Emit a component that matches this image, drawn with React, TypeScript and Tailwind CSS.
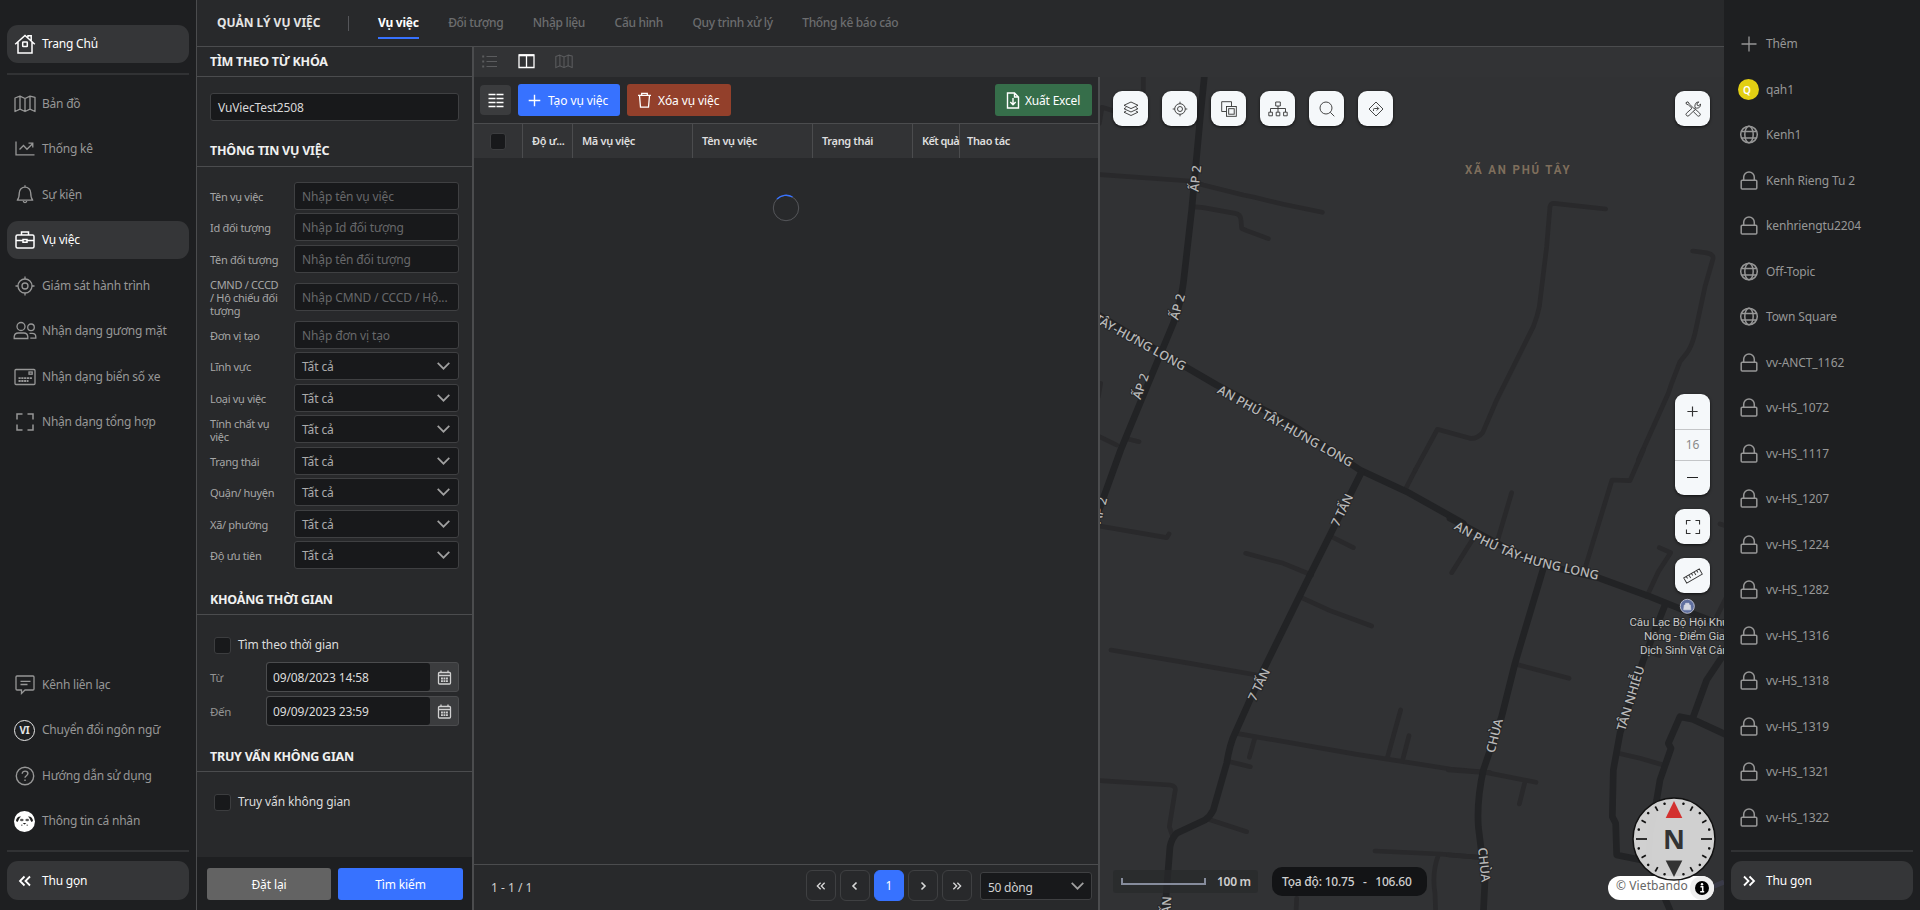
import React from "react";

type IconProps = { className?: string };

const Svg = ({ children, vb = "0 0 24 24", className, sw = 1.3 }: { children: React.ReactNode; vb?: string; className?: string; sw?: number }) => (
  <svg viewBox={vb} className={className} fill="none" stroke="currentColor" strokeWidth={sw}>
    {children}
  </svg>
);

const HomeIcon = () => (
  <Svg className="size-[22px]" vb="0 0 22 22" sw={1.5}>
    <path d="M1.2 11.2 11 2.4l9.800 8.800M4 9.2V20h14V9.2M14 4.2V2.800h3.2v4.800" />
    <rect x="8.7" y="9" width="4.6" height="4.6" rx="0.5" />
  </Svg>
);
const MapIcon = ({ className = "size-[22px]" }: IconProps) => (
  <Svg className={className} vb="0 0 22 22">
    <path d="M1 5v13.5l5-2.3 5 2.3 5-2.3 5 2.3V4.3L16 3.2 11 5.5 6 3.2zM6 3.2v13M11 5.5v13M16 3.2v13" strokeLinejoin="round" />
  </Svg>
);
const ChartIcon = () => (
  <Svg className="size-[22px]" vb="0 0 22 22">
    <path d="M2 3.5v13.3h18.5M5.5 11.5l4-4 3.5 3.7 5.5-5.5M14.5 5.2h4.3v4.2" />
  </Svg>
);
const BellIcon = () => (
  <Svg className="size-[22px]" vb="0 0 22 22">
    <path d="M3.3 16.2c1.7-2 2-3.500 2-7.400a5.700 5.700 0 0 1 11.400 0c0 3.900.3 5.400 2 7.400zM9.300 17c0 2 3.400 2 3.400 0M11 1.300v1.800" strokeLinejoin="round" />
  </Svg>
);
const CaseIcon = () => (
  <Svg className="size-[22px]" vb="0 0 22 22" sw={1.500}>
    <rect x="2" y="6" width="18" height="13" rx="1.500" />
    <path d="M7.500 6V3h7v3M2 11.500h7M13 11.500h7M9 10.500h4v2.700H9z" />
  </Svg>
);
const TargetIcon = ({ className = "size-[22px]" }: IconProps) => (
  <Svg className={className} vb="0 0 22 22">
    <circle cx="11" cy="11" r="7" />
    <circle cx="11" cy="11" r="3" />
    <path d="M11 1.500V4M11 18v2.500M1.500 11H4M18 11h2.500" />
  </Svg>
);
const PeopleIcon = () => (
  <Svg className="h-[22px] w-6 shrink-0 -ml-px" vb="0 0 24 22">
    <circle cx="8" cy="6.500" r="4" />
    <path d="M1.200 18.500v-2a4 4 0 0 1 4-3.500h5.600a4 4 0 0 1 4 3.500v2z" />
    <circle cx="18" cy="7.300" r="3.300" />
    <path d="M16.500 13.300h2.800a3.500 3.500 0 0 1 3.500 3.400v1.500h-5.500" />
  </Svg>
);
const PlateIcon = () => (
  <Svg className="size-[22px]" vb="0 0 22 22">
    <rect x="1" y="3.500" width="20" height="15" rx="1" />
    <path d="M4.500 12.200h13.500M4.500 15h10" strokeDasharray="2.200 .6" strokeWidth="1.800" />
    <rect x="15" y="6" width="3.200" height="2.200" />
  </Svg>
);
const FrameIcon = ({ className = "size-[22px]" }: IconProps) => (
  <Svg className={className} vb="0 0 22 22" sw={1.500}>
    <path d="M3 8.500V3h5.500M13.500 3H19v5.500M19 13.500V19h-5.500M8.500 19H3v-5.500" />
  </Svg>
);
const ChatIcon = () => (
  <Svg className="size-[22px]" vb="0 0 22 22">
    <path d="M3 2h16a1 1 0 0 1 1 1v12a1 1 0 0 1-1 1h-8l-3.500 3.500V16H3a1 1 0 0 1-1-1V3a1 1 0 0 1 1-1zM6.500 7.300h10M6.500 10.500h7" />
  </Svg>
);
const ViIcon = () => (
  <span className="flex size-[21px] items-center justify-center rounded-full border-[1.500px] border-[#e6e6e6] text-[10px] font-bold leading-none text-[#e6e6e6]">VI</span>
);
const HelpIcon = () => (
  <Svg className="size-[22px]" vb="0 0 22 22" sw={1.400}>
    <circle cx="11" cy="11" r="8.700" />
    <path d="M8.200 8.800c0-3.700 5.700-3.500 5.700-.2 0 2.100-2.900 2.100-2.900 4.200M11 14.500v1.500" />
  </Svg>
);
const AvatarIcon = () => (
  <svg viewBox="0 0 21 21" className="size-[21px]">
    <circle cx="10.500" cy="10.500" r="10.500" fill="#fff" />
    <g fill="#222">
      <path d="M2 10c0-3 2.500-5 5-4.500C5 7 5 9 3.500 11zM19 10c0-3-2.500-5-5-4.500 2 1.500 2 3.500 3.500 5.500z" />
      <ellipse cx="7.800" cy="9" rx="1.800" ry="1.300" opacity=".75" />
      <ellipse cx="13.200" cy="9" rx="1.800" ry="1.300" opacity=".75" />
      <path d="M8.700 12h3.600l-1.800 1.500zM7 13.800h1.500v.8H7zM12.500 13.800H14v.8h-1.500z" />
    </g>
  </svg>
);
const PlusIcon = ({ className = "size-[22px]", sw = 1.300 }: IconProps & { sw?: number }) => (
  <Svg className={className} vb="0 0 22 22" sw={sw}>
    <path d="M11 3.500v15M3.500 11h15" />
  </Svg>
);
const GlobeIcon = () => (
  <Svg className="size-[22px]" vb="0 0 22 22" sw={1.500}>
    <circle cx="11" cy="10.500" r="8.300" />
    <ellipse cx="11" cy="10.500" rx="4.200" ry="8.300" />
    <path d="M3.500 7.500h15M3.500 14h15" />
  </Svg>
);
const LockIcon = () => (
  <Svg className="size-[22px]" vb="0 0 22 22" sw={1.500}>
    <rect x="3.200" y="10.200" width="15.600" height="8.800" rx="1" />
    <path d="M5.700 10.200V7.200a5.300 5.300 0 0 1 10.600 0v3" />
  </Svg>
);
const Chevrons = ({ flip = false, className = "size-[22px]" }: IconProps & { flip?: boolean }) => (
  <Svg className={flip ? className + " -scale-x-100" : className} vb="0 0 22 22" sw={1.800}>
    <path d="m10.500 6.500-4.500 4.500 4.500 4.500M16 6.500l-4.500 4.500 4.500 4.500" />
  </Svg>
);
const Chevron = ({ className = "" }: IconProps) => (
  <Svg className={"h-2 w-[13px] " + className} vb="0 0 13 8" sw={1.700}>
    <path d="m.7.900 5.800 5.800L12.300.9" />
  </Svg>
);

const NAV = [
  { label: "Bản đồ", icon: <MapIcon /> },
  { label: "Thống kê", icon: <ChartIcon /> },
  { label: "Sự kiện", icon: <BellIcon /> },
  { label: "Vụ việc", icon: <CaseIcon />, active: true },
  { label: "Giám sát hành trình", icon: <TargetIcon /> },
  { label: "Nhận dạng gương mặt", icon: <PeopleIcon /> },
  { label: "Nhận dạng biển số xe", icon: <PlateIcon /> },
  { label: "Nhận dạng tổng hợp", icon: <FrameIcon /> },
];
const NAV_BOTTOM = [
  { label: "Kênh liên lạc", icon: <ChatIcon /> },
  { label: "Chuyển đổi ngôn ngữ", icon: <ViIcon /> },
  { label: "Hướng dẫn sử dụng", icon: <HelpIcon /> },
  { label: "Thông tin cá nhân", icon: <AvatarIcon /> },
];

function NavItem({ label, icon, active }: { label: string; icon: React.ReactNode; active?: boolean }) {
  return (
    <div className={"flex h-[38px] shrink-0 items-center rounded-[11px] pl-[7px] " + (active ? "bg-[#353638] text-white" : "text-[#979797]")}>
      <span className="flex w-[22px] shrink-0 items-center justify-start">{icon}</span>
      <span className="ml-1.5 whitespace-nowrap">{label}</span>
    </div>
  );
}

const Divider = () => <div className="h-0.5 shrink-0 bg-[#313234]" />;

function LeftSidebar() {
  return (
    <aside className="flex h-full w-[196px] shrink-0 flex-col bg-[#1e1f21] px-[7px] pb-2.5 pt-[25px] tracking-[-0.22px]">
      <NavItem label="Trang Chủ" icon={<HomeIcon />} active />
      <div className="mb-[9.600px] mt-2.5"><Divider /></div>
      <div className="flex flex-col gap-[7.500px]">
        {NAV.map((n) => <NavItem key={n.label} {...n} />)}
      </div>
      <div className="mt-auto flex flex-col gap-[7.500px] pb-[9.600px]">
        {NAV_BOTTOM.map((n) => <NavItem key={n.label} {...n} />)}
      </div>
      <Divider />
      <div className="mt-[9px] flex h-[39px] shrink-0 items-center rounded-[11px] bg-[#353638] pl-[7px] text-white">
        <Chevrons />
        <span className="ml-1.5">Thu gọn</span>
      </div>
    </aside>
  );
}

const CHANNELS: [string, "globe" | "lock"][] = [
  ["Kenh1", "globe"], ["Kenh Rieng Tu 2", "lock"], ["kenhriengtu2204", "lock"], ["Off-Topic", "globe"], ["Town Square", "globe"],
  ["vv-ANCT_1162", "lock"], ["vv-HS_1072", "lock"], ["vv-HS_1117", "lock"], ["vv-HS_1207", "lock"], ["vv-HS_1224", "lock"],
  ["vv-HS_1282", "lock"], ["vv-HS_1316", "lock"], ["vv-HS_1318", "lock"], ["vv-HS_1319", "lock"], ["vv-HS_1321", "lock"], ["vv-HS_1322", "lock"],
];

function RightSidebar() {
  return (
    <aside className="flex h-full w-[196px] shrink-0 flex-col bg-[#1e1f21] px-[7px] pb-2.5 pt-[25px] tracking-[-0.13px]">
      <div className="flex flex-col gap-[7.500px] pt-[0.400px]">
        <NavItem label="Thêm" icon={<PlusIcon />} />
        <NavItem label="qah1" icon={<span className="flex size-[21px] items-center justify-start rounded-full bg-[#e2cf13] pl-[5px] text-[10px] font-semibold text-white">Q</span>} />
        {CHANNELS.map(([name, kind]) => (
          <NavItem key={name} label={name} icon={kind === "globe" ? <GlobeIcon /> : <LockIcon />} />
        ))}
      </div>
      <div className="mt-auto"><Divider /></div>
      <div className="mt-[9px] flex h-[39px] shrink-0 items-center rounded-[11px] bg-[#353638] pl-[7px] text-white">
        <Chevrons flip />
        <span className="ml-1.5">Thu gọn</span>
      </div>
    </aside>
  );
}

const TABS = ["Đối tượng", "Nhập liệu", "Cấu hình", "Quy trình xử lý", "Thống kê báo cáo"];

function TopBar() {
  return (
    <header className="flex h-[47px] shrink-0 items-center border-b border-[#4b4c4e] pl-5">
      <h1 className="w-[104px] whitespace-nowrap text-[12px] font-bold text-[#e4e4e4]">QUẢN LÝ VỤ VIỆC</h1>
      <div className="ml-[27px] h-[15px] w-px bg-[#55565a]" />
      <nav className="ml-[29px] flex h-full items-center gap-[29.500px] text-[12px] font-medium tracking-[-0.32px] text-[#6c6d6f]">
        <span className="-mb-[8px] whitespace-nowrap border-b-2 border-[#3772ff] pb-[6px] font-bold tracking-[-0.25px] text-white">Vụ việc</span>
        {TABS.map((t) => <span key={t} className="whitespace-nowrap">{t}</span>)}
      </nav>
    </header>
  );
}

const FIELDS: { label: string; placeholder?: string; tall?: boolean }[] = [
  { label: "Tên vụ việc", placeholder: "Nhập tên vụ việc" },
  { label: "Id đối tượng", placeholder: "Nhập Id đối tượng" },
  { label: "Tên đối tượng", placeholder: "Nhập tên đối tượng" },
  { label: "CMND / CCCD / Hộ chiếu đối tượng", placeholder: "Nhập CMND / CCCD / Hộ...", tall: true },
  { label: "Đơn vị tạo", placeholder: "Nhập đơn vị tạo" },
  { label: "Lĩnh vực" }, { label: "Loại vụ việc" }, { label: "Tính chất vụ việc" }, { label: "Trạng thái" },
  { label: "Quận/ huyện" }, { label: "Xã/ phường" }, { label: "Độ ưu tiên" },
];

const SectionTitle = ({ children, className }: { children: React.ReactNode; className: string }) => (
  <div className={"flex shrink-0 items-end border-b border-[#4b4c4e] pl-[13px] text-[12.500px] font-bold leading-[17px] tracking-[-0.25px] text-[#f0f0f0] " + className}>{children}</div>
);

const DateRow = ({ label, value }: { label: string; value: string }) => (
  <div className="flex h-[30px] items-center">
    <span className="w-14 pt-px text-[11.500px] tracking-[-0.3px] text-[#939393]">{label}</span>
    <div className="flex h-[30px] flex-1 overflow-hidden rounded-[3px] border border-[#4b4c4e] bg-[#3b3c3e]">
      <div className="flex w-[163px] items-center rounded-[3px] bg-[#18191b] pl-[6px] pt-px text-[#dcdcdc]">{value}</div>
      <div className="flex flex-1 items-center justify-center text-[#d0d0d0]">
        <Svg className="size-[15px]" vb="0 0 15 15" sw={1.300}>
          <rect x="1.500" y="2.500" width="12" height="11.500" rx="1" />
          <path d="M4 .5v2M11 .5v2M1.500 5.500h12" />
          <path d="M4 8.500h7M4 11.200h7" strokeWidth="1.800" strokeDasharray="1.900 .6" />
        </Svg>
      </div>
    </div>
  </div>
);

const Checkbox = ({ className = "size-[17px]" }: IconProps) => <span className={"block shrink-0 rounded-[3px] border border-[#3c3d3f] bg-[#18191b] " + className} />;

function SearchPanel() {
  return (
    <section className="flex w-[275px] shrink-0 flex-col tracking-[-0.12px]">
      <SectionTitle className="h-[30px] pb-[6px]">TÌM THEO TỪ KHÓA</SectionTitle>
      <div className="mx-[13px] mt-4 flex h-7 w-[249px] shrink-0 items-center rounded-[3px] border border-[#3f4042] bg-[#18191b] pl-[7px] pt-0.5 text-[#d8d8d8]">VuViecTest2508</div>
      <SectionTitle className="h-[46px] pb-[7px]">THÔNG TIN VỤ VIỆC</SectionTitle>
      <div className="mt-[13px] flex shrink-0 flex-col pl-[13px]">
        {FIELDS.map((f) => (
          <div key={f.label} className={"flex items-center " + (f.tall ? "h-[44.500px]" : "h-[31.500px]")}>
            <span className="w-[84px] pr-3 pt-px text-[11px] leading-[13px] tracking-[-0.3px] text-[#a6a6a6]">{f.label}</span>
            <div className={"flex h-7 w-[165px] items-center rounded-[3px] border border-[#3f4042] bg-[#18191b] pl-[7px] pr-2 " + (f.placeholder ? "text-[#67686a]" : "text-[#ababab]")}>
              <span className="flex-1 whitespace-nowrap pt-0.5">{f.placeholder ?? "Tất cả"}</span>
              {!f.placeholder && <Chevron className="text-[#a0a0a0]" />}
            </div>
          </div>
        ))}
      </div>
      <SectionTitle className="h-[44px] pb-[6px]">KHOẢNG THỜI GIAN</SectionTitle>
      <div className="flex shrink-0 flex-col px-[13px] pt-[21px]">
        <div className="flex h-[18px] items-center gap-[7px] pl-1 text-[#dcdcdc]"><Checkbox /><span>Tìm theo thời gian</span></div>
        <div className="mt-2 flex flex-col gap-1">
          <DateRow label="Từ" value="09/08/2023 14:58" />
          <DateRow label="Đến" value="09/09/2023 23:59" />
        </div>
      </div>
      <SectionTitle className="h-[46px] pb-[6px]">TRUY VẤN KHÔNG GIAN</SectionTitle>
      <div className="flex h-[60px] items-center gap-[7px] pl-[17px] text-[#dcdcdc]"><Checkbox /><span>Truy vấn không gian</span></div>
      <div className="mt-auto flex h-[53px] shrink-0 gap-[7px] bg-[#1e1f21] pl-2.5 pt-[11px] text-white">
        <div className="flex h-8 w-[124px] items-center justify-center rounded-[3px] bg-[#636363] pt-0.5">Đặt lại</div>
        <div className="flex h-8 w-[125px] items-center justify-center rounded-[3px] bg-[#3772ff] pt-0.5">Tìm kiếm</div>
      </div>
    </section>
  );
}

function ViewBar() {
  return (
    <div className="flex h-[30px] shrink-0 items-center gap-[20px] bg-[#323335] pb-px pl-[7px] text-[#5b5c5e]">
      <Svg className="h-[15px] w-[17px]" vb="0 0 17 15" sw={1.200}>
        <path d="M5.500 2.500H16M5.500 7.500H16M5.500 12.500H16" />
        <path d="M1.200 2.500h2M1.200 7.500h2M1.200 12.500h2" strokeWidth="2" />
      </Svg>
      <Svg className="h-[15px] w-[17px] text-white" vb="0 0 17 15" sw={1.300}>
        <path d="M1 1h15v12.500H1zM8.500 1v12.500" />
        <path d="M1 1.300h15" strokeWidth="2" />
      </Svg>
      <MapIcon className="h-[19px] w-[18px]" />
    </div>
  );
}

const COLUMNS: [string, string][] = [
  ["Độ ư...", "w-[50px] pl-[9px]"],
  ["Mã vụ việc", "w-[120px] pl-[9px]"],
  ["Tên vụ việc", "w-[120px] pl-[9px]"],
  ["Trạng thái", "w-[100px] pl-[9px]"],
  ["Kết quả", "w-[47px] pl-[9px] tracking-[-0.6px]"],
];

const PageButton = ({ children, active }: { children: React.ReactNode; active?: boolean }) => (
  <span className={"flex h-[31px] w-[30px] items-center justify-center rounded-[6px] border " + (active ? "border-[#3772ff] bg-[#3772ff] text-white" : "border-[#3f4042] text-[#d8d8d8]")}>{children}</span>
);

function CaseList() {
  return (
    <section className="flex w-[624px] shrink-0 flex-col">
      <div className="flex h-[46px] shrink-0 items-center pl-1.5 pr-[6px] text-white">
        <span className="flex h-[30px] w-[31px] items-center justify-center rounded-[4px] bg-[#3b3c3e]">
          <Svg className="h-[15px] w-4" vb="0 0 16 15" sw={1.400}>
            <path d="M.5 1.500h7M8.500 1.500h7M.5 5.500h7M8.500 5.500h7M.5 9.500h7M8.500 9.500h7M.5 13.500h7M8.500 13.500h7" />
          </Svg>
        </span>
        <span className="ml-[7px] flex h-8 w-[102px] items-center rounded-[3px] bg-[#3772ff] pl-2 tracking-[-0.1px]">
          <PlusIcon className="mr-[5px] size-[17px]" sw={1.800} /><span className="pt-0.5">Tạo vụ việc</span>
        </span>
        <span className="ml-[7px] flex h-8 w-[104px] items-center rounded-[3px] bg-[#93402b] pl-[10px] tracking-[-0.1px]">
          <Svg className="mr-[6px] h-4 w-[15px]" vb="0 0 15 16" sw={1.300}>
            <path d="M1 3.300h13M4.700 3V1.300h5.600V3M2.500 3.500l1 11.700h8l1-11.700" />
          </Svg>
          <span className="pt-0.5">Xóa vụ việc</span>
        </span>
        <span className="ml-auto flex h-8 w-[97px] items-center rounded-[3px] bg-[#366e4a] pl-[11px] tracking-[-0.2px]">
          <Svg className="mr-[5px] h-[17px] w-[14px]" vb="0 0 14 17" sw={1.400}>
            <path d="M1.500 1h7l4 4v11h-11zM8.500 1v4h4M7 6v6.500M4.300 10 7 12.700 9.700 10" />
          </Svg>
          <span className="pt-0.5">Xuất Excel</span>
        </span>
      </div>
      <div className="flex h-[35px] shrink-0 items-stretch border-t border-[#4b4c4e] bg-[#323335] text-[11px] font-semibold tracking-[-0.35px] text-[#dedede]">
        <div className="flex w-[49px] items-center justify-center border-r border-[#4b4c4e]"><Checkbox className="h-[17px] w-4" /></div>
        {COLUMNS.map(([name, cls]) => (
          <div key={name} className={"flex shrink-0 items-center whitespace-nowrap border-r border-[#4b4c4e] " + cls}>{name}</div>
        ))}
        <div className="flex items-center pl-[7px]">Thao tác</div>
      </div>
      <div className="flex flex-1 justify-center pt-9">
        <svg viewBox="0 0 28 28" className="size-[28px]" fill="none">
          <circle cx="14" cy="14" r="12.700" stroke="#55565a" />
          <path d="M5 5A12.700 12.700 0 0 1 20.500 3" stroke="#3772ff" strokeWidth="1.400" />
        </svg>
      </div>
      <div className="flex h-[46px] shrink-0 items-center border-t border-[#4b4c4e] pb-1 pl-[17px] pr-[6px] text-[#d0d0d0]">
        <span className="pt-1">1 - 1 / 1</span>
        <div className="ml-auto flex gap-1">
          <PageButton><Chevrons className="size-4" /></PageButton>
          <PageButton><Svg className="size-3" vb="0 0 12 12" sw={1.600}><path d="m7.500 2.500-3.500 3.500 3.500 3.500" /></Svg></PageButton>
          <PageButton active>1</PageButton>
          <PageButton><Svg className="size-3" vb="0 0 12 12" sw={1.600}><path d="m4.500 2.500 3.500 3.500-3.500 3.500" /></Svg></PageButton>
          <PageButton><Chevrons flip className="size-4" /></PageButton>
        </div>
        <div className="ml-2 mt-px flex h-7 w-[112px] items-center justify-between rounded-[3px] border border-[#3f4042] bg-[#18191b] pl-[7px] pr-[7px] tracking-[-0.25px]">
          <span className="pt-[3px]">50 dòng</span><Chevron className="text-[#a0a0a0]" />
        </div>
      </div>
    </section>
  );
}

const MINOR_NW = "M160 0V70M28 160 36 112 80 125M28 314 300 333 340 345 460 375 490 381 580 403 697 427M308 410 340 413 435 430Q452 432 453 450L455 475 470 482 535 506M32 940 25 980M28 1100 80 1125M105 1105 147 1115";
const MINOR_SW = "M720 258 790 293M467 310 580 340 665 375M628 440 720 482 845 528M63 600 300 640 500 675M440 850 800 913 1080 957 1200 968M495 862 478 922M413 934 481 950M355 1108 470 1145M28 992 240 1005Q260 1008 255 1025L238 1130 250 1165M932 780 893 920M957 857 938 930M855 1203 1050 1212 1170 1222M1045 1215Q1025 1270 1035 1330L1037 1390M620 1345 618 1390M28 228 230 263 237 252M945 120 976 60";
const MINOR_NE = "M-104 1230-38 1108 60 1135Q80 1138 98 1118L140 1020 250 800Q262 770 268 740L290 560 300 440Q302 430 312 430L467 447M728 573 765 578Q795 582 788 600L765 680 735 820Q725 860 710 880L690 905 665 970 655 1000 565 1200";
const MINOR_SE = "M580 0 540 92 486 90 405 355M185 128 140 280M70 265 5 368M628 293 662 308 625 365 590 440M810 222 830 228M830 440 800 500M195 642 357 685M608 610 628 617M505 910 570 925 640 945M-5 960 110 968 258 997M225 995 208 1062M-5 1215 90 1222";
const MAJOR_W = "M345 0 330 150 305 420 280 640Q272 700 250 760L200 880 150 1000 92 1140 45 1270 20 1340M0 720 200 840 380 945 600 1060 810 1200 950 1265 1120 1360";
const MAJOR_SW = "M815 65 660 375 520 660 435 850Q420 880 410 940L370 1080Q360 1100 345 1110L260 1150Q245 1165 240 1190L228 1340 220 1390";
const MAJOR_SE = "M0 205 30 220 150 285 280 345 450 385 600 440 700 480 830 530M280 355 195 640 155 800 100 960Q80 1050 85 1130L105 1290 100 1390M645 465 580 630 510 850 490 960 487 1100 497 1120 500 1215 600 1235M830 600 770 690 728 805M830 855 728 808 690 800 655 880 663 895 630 990 620 1050 600 1150 595 1230 660 1380";

const TICKS = Array.from({ length: 24 }, (_, i) => i * 15).filter((a) => a % 180 !== 0);

function MapCanvas() {
  return (
    <svg viewBox="1100 77 624 833" className="block h-[833px] w-[624px]" fill="none">
      <g strokeLinecap="round" strokeLinejoin="round">
        <g stroke="#29292b" strokeWidth="14">
          <path transform="translate(1090 70) scale(.33333)" d={MINOR_NW} />
          <path transform="translate(1090 450) scale(.33333)" d={MINOR_SW} />
          <path transform="translate(1450 60) scale(.33333)" d={MINOR_NE} />
          <path transform="translate(1450 450) scale(.33333)" d={MINOR_SE} />
        </g>
        <g stroke="#222325" strokeWidth="20">
          <path transform="translate(1090 70) scale(.33333)" d={MAJOR_W} />
          <path transform="translate(1090 450) scale(.33333)" d={MAJOR_SW} />
          <path transform="translate(1450 450) scale(.33333)" d={MAJOR_SE} />
        </g>
      </g>
      <path d="M1712 887 1724 882" stroke="#3a3b48" strokeWidth="5" />
      <defs>
        <path id="road-a" d="M1049 296.800 1191 375.400" />
        <path id="road-b" d="M1216.500 392.500 1355 470" />
        <path id="road-c" d="M1453.500 528.500Q1500 557 1545 568L1606 581.500" />
      </defs>
      <g fill="#b9b9b9" stroke="#252628" strokeWidth="2" paintOrder="stroke" fontSize="12.500" fontWeight="500" className="font-['Noto_Sans',sans-serif]">
        <text><textPath href="#road-a" textLength="153">AN PHÚ TÂY-HƯNG LONG</textPath></text>
        <text><textPath href="#road-b" textLength="153">AN PHÚ TÂY-HƯNG LONG</textPath></text>
        <text><textPath href="#road-c" textLength="154">AN PHÚ TÂY-HƯNG LONG</textPath></text>
        <text transform="translate(1198.500 192) rotate(-84)">ẤP 2</text>
        <text transform="translate(1178 320.500) rotate(-74)">ẤP 2</text>
        <text transform="translate(1140.500 400) rotate(-71)">ẤP 2</text>
        <text transform="translate(1100.500 524) rotate(-75)">ẤP 2</text>
        <text transform="translate(1338.500 527.500) rotate(-64)">7 TẤN</text>
        <text transform="translate(1255.500 702) rotate(-64)">7 TẤN</text>
        <text transform="translate(1169 931) rotate(-86)">7 TẤN</text>
        <text transform="translate(1494.500 753.500) rotate(-76)">CHÙA</text>
        <text transform="translate(1478 848) rotate(84)">CHÙA</text>
        <text transform="translate(1625 731.500) rotate(-73)" textLength="67">TÂN NHIỄU</text>
      </g>
      <text transform="translate(1465 173.500) scale(.85 1)" fill="#84725f" fillOpacity=".95" fontSize="13.500" fontWeight="700" textLength="123" className="font-[Roboto,sans-serif]">XÃ AN PHÚ TÂY</text>
      <circle cx="1687.300" cy="606.300" r="7" fill="#5f6f9f" stroke="#b9bccb" />
      <path d="M1684.300 605h6l.6 4.800h-7.200zM1685.600 605v-1.700h3.400v1.700" fill="#d5d8e2" stroke="#d5d8e2" strokeWidth=".7" />
      <g fill="#c6c6c6" stroke="#252628" strokeWidth="2" paintOrder="stroke" fontSize="11.500" letterSpacing="-.13" className="font-[Roboto,sans-serif]">
        <text x="1629.500" y="626">Câu Lạc Bộ Hội Khuyến</text>
        <text x="1644" y="640">Nông - Điểm Giao</text>
        <text x="1640" y="654">Dịch Sinh Vật Cảnh</text>
      </g>
    </svg>
  );
}

function Compass() {
  return (
    <svg viewBox="0 0 84 84" className="absolute left-[532px] top-[720px] size-[84px]">
      <circle cx="42" cy="42" r="41" fill="#dddddd" fillOpacity=".93" stroke="#111" strokeWidth="1.500" />
      {TICKS.map((a) =>
        a % 90 === 0 ? (
          <path key={a} d="M42 4v11" stroke="#111" strokeWidth="1.700" transform={`rotate(${a} 42 42)`} />
        ) : a % 30 === 0 ? (
          <path key={a} d="M42 4.500v5" stroke="#111" strokeWidth="1.700" transform={`rotate(${a} 42 42)`} />
        ) : null
      )}
      {[15, 45, 75, 105, 135, 165, 195, 225, 255, 285, 315, 345].map((a) => (
        <circle key={a} cx="42" cy="5.500" r="1.300" fill="#111" transform={`rotate(${a} 42 42)`} />
      ))}
      <path d="M42 4 50.300 21H33.700z" fill="#d3312f" />
      <path d="M42 80 50.300 63.500H33.700z" fill="#333" />
      <text x="42" y="51.500" textAnchor="middle" fontSize="27" fontWeight="700" fill="#333" className="font-['Noto_Sans',sans-serif]">N</text>
    </svg>
  );
}

const BTN = "flex size-[35px] items-center justify-center rounded-[9px] bg-[#f5f8fa] text-[#333] shadow-[0_1px_3px_rgba(0,0,0,.7)]";

function MapView() {
  return (
    <section className="relative h-full flex-1 overflow-hidden bg-[#313234]">
      <MapCanvas />
      <div className="absolute left-[13px] top-3.5 flex gap-3.5">
        <span className={BTN}>
          <Svg className="size-4" vb="0 0 16 16" sw={0.900}>
            <path d="m8 1 7 3.300L8 7.600 1 4.300zM3.200 6.500 1 7.700 8 11l7-3.300-2.200-1.200M3.200 10 1 11.200l7 3.300 7-3.300L12.800 10" />
          </Svg>
        </span>
        <span className={BTN}>
          <Svg className="size-4" vb="0 0 16 16" sw={0.900}>
            <circle cx="8" cy="8" r="5.300" /><circle cx="8" cy="8" r="2.500" />
            <path d="M8 .7v2M8 13.300v2M.7 8h2M13.300 8h2" />
          </Svg>
        </span>
        <span className={BTN}>
          <Svg className="size-4" vb="0 0 16 16" sw={0.900}>
            <path d="M5 10.500H.7V.7h9.800V5" /><rect x="5.500" y="5.500" width="9.800" height="9.800" /><rect x="7.700" y="7.700" width="5.500" height="5.500" />
          </Svg>
        </span>
        <span className={BTN}>
          <Svg className="h-4 w-5" vb="0 0 20 16" sw={0.900}>
            <path d="M7.700 1h4.600v4H7.700zM10 5v6M2.500 11V7.500h15V11M.8 11.200h3.600v3.600H.8zM8.200 11.200h3.600v3.600H8.200zM15.600 11.200h3.600v3.600h-3.600z" />
          </Svg>
        </span>
        <span className={BTN}>
          <Svg className="size-4" vb="0 0 16 16" sw={0.900}><circle cx="7" cy="7" r="6" /><path d="m11.300 11.300 4 4" /></Svg>
        </span>
        <span className={BTN}>
          <Svg className="size-4" vb="0 0 16 16" sw={0.900}>
            <path d="M8 1 15 8 8 15 1 8zM5.500 10V8.500q0-1 1-1h4M8.700 5.500l2 2-2 2" strokeLinejoin="round" />
          </Svg>
        </span>
      </div>
      <span className={BTN + " absolute left-[575px] top-3.5"}>
        <Svg className="size-4" vb="0 0 16 16" sw={0.900}>
          <path d="m1 1.600 2-.8 1.300 2.200L9 7.500l1.500-.5a3.500 3.500 0 0 1-.3-3.500 3.500 3.500 0 0 1 3.600-2.600l-1.900 2 .5 1.500 1.500.4 1.600-1.900c.4 2.900-1.600 4.500-3.900 4.200L4 14.500a1.500 1.500 0 0 1-2.500-2.300L7 7.300 3.500 4 1.300 3zM9.500 9.500l1.200-1 4 3.700a1.600 1.600 0 0 1-2.200 2.500L8.300 10.600" />
        </Svg>
      </span>
      <div className="absolute left-[575px] top-[317px] flex flex-col gap-3.5">
        <div className="flex h-[101px] w-[35px] flex-col rounded-[9px] bg-[#f5f8fa] text-[#333] shadow-[0_1px_3px_rgba(0,0,0,.7)]">
          <span className="flex h-9 items-center justify-center border-b border-[#c4c6c8]"><PlusIcon className="size-[15px]" sw={1.700} /></span>
          <span className="flex h-[30px] items-center justify-center text-[12px] text-[#8a8a8a]">16</span>
          <span className="flex h-[35px] items-center justify-center border-t border-[#c4c6c8]"><span className="mb-px h-px w-[11px] bg-[#222]" /></span>
        </div>
        <span className={BTN}><Svg className="size-[18px]" vb="0 0 22 22" sw={1.300}><path d="M3 8V3h5M14 3h5v5M19 14v5h-5M8 19H3v-5" /></Svg></span>
        <span className={BTN}>
          <Svg className="size-5 -rotate-30" vb="0 0 20 20" sw={0.900}>
            <path d="M1 7h18v6H1zM4 7v2.500M7 7v3.500M10 7v2.500M13 7v3.500M16 7v2.500" />
          </Svg>
        </span>
      </div>
      <div className="absolute left-[13px] top-[793px] flex h-[23px] w-[145px] items-center rounded-[3px] bg-[#28292b]/70 pl-[8px]">
        <span className="h-[7px] w-[85px] border-x-2 border-b-2 border-[#868c9c]" />
        <span className="ml-[11px] whitespace-nowrap font-semibold tracking-[-0.3px] text-[#cfcfcf]">100 m</span>
      </div>
      <div className="absolute left-[172px] top-[790px] flex h-[29px] w-[155px] items-center whitespace-pre rounded-[10px] bg-[#131416] pl-2.5 font-medium tracking-[-0.22px] text-[#cfcfcf]">Tọa độ: 10.75   -   106.60</div>
      <div className="absolute left-[508px] top-[799px] flex h-6 w-[106px] items-center justify-between rounded-full bg-white pl-2 text-[12px] text-[#666]">
        <span className="pb-1 tracking-[0.1px]">© Vietbando</span>
        <span className="flex size-6 items-center justify-center rounded-full bg-[#efefef]">
          <svg viewBox="0 0 14 14" className="size-3.5"><circle cx="7" cy="7" r="7" fill="#000" /><path d="M5.500 5.800h2.200v4.900M5.200 10.700h4" stroke="#fff" strokeWidth="1.500" fill="none" /><circle cx="7" cy="3.200" r="1.200" fill="#fff" /></svg>
        </span>
      </div>
      <Compass />
    </section>
  );
}

export default function App() {
  return (
    <div className="flex h-[910px] w-[1920px] overflow-hidden bg-[#28292b] font-['Noto_Sans','Open_Sans',sans-serif] text-[12px] leading-4">
      <LeftSidebar />
      <main className="flex h-full w-[1528px] shrink-0 flex-col border-l border-[#4b4c4e]">
        <TopBar />
        <div className="flex min-h-0 flex-1">
          <SearchPanel />
          <div className="flex min-w-0 flex-1 flex-col border-l-2 border-[#4b4c4e]">
            <ViewBar />
            <div className="flex min-h-0 flex-1">
              <CaseList />
              <div className="w-0.5 shrink-0 bg-[#4b4c4e]" />
              <MapView />
            </div>
          </div>
        </div>
      </main>
      <RightSidebar />
    </div>
  );
}
